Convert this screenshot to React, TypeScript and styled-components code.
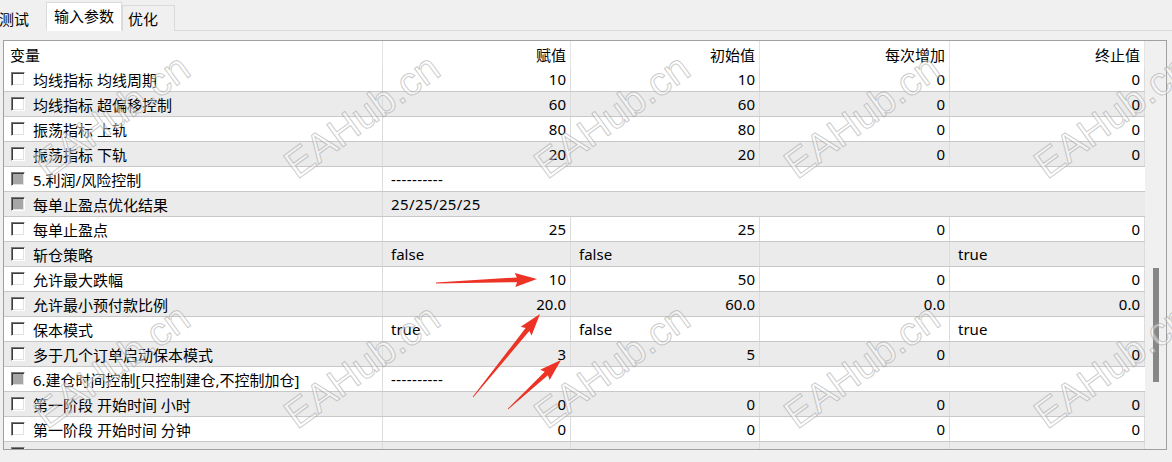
import styled, { createGlobalStyle } from 'styled-components';

const GlobalStyle = createGlobalStyle`
  html, body {
    margin: 0;
    padding: 0;
    background: #f0f0f0;
  }
  body {
    font-family: "Noto Sans", "Noto Sans CJK SC", sans-serif;
    color: #000;
  }
`;

const COLS = '379px 188px 189px 190px 195px';

interface Param {
  name: string;
  values?: string[];
  section?: string;
}

const params: Param[] = [
  { name: '均线指标 均线周期', values: ['10', '10', '0', '0'] },
  { name: '均线指标 超偏移控制', values: ['60', '60', '0', '0'] },
  { name: '振荡指标 上轨', values: ['80', '80', '0', '0'] },
  { name: '振荡指标 下轨', values: ['20', '20', '0', '0'] },
  { name: '5.利润/风险控制', section: '----------' },
  { name: '每单止盈点优化结果', section: '25/25/25/25' },
  { name: '每单止盈点', values: ['25', '25', '0', '0'] },
  { name: '斩仓策略', values: ['false', 'false', '', 'true'] },
  { name: '允许最大跌幅', values: ['10', '50', '0', '0'] },
  { name: '允许最小预付款比例', values: ['20.0', '60.0', '0.0', '0.0'] },
  { name: '保本模式', values: ['true', 'false', '', 'true'] },
  { name: '多于几个订单启动保本模式', values: ['3', '5', '0', '0'] },
  { name: '6.建仓时间控制[只控制建仓,不控制加仓]', section: '----------' },
  { name: '第一阶段 开始时间 小时', values: ['0', '0', '0', '0'] },
  { name: '第一阶段 开始时间 分钟', values: ['0', '0', '0', '0'] },
  { name: '', values: ['', '', '', ''] },
];

const headers = ['赋值', '初始值', '每次增加', '终止值'];

const Page = styled.div`
  position: relative;
  width: 1172px;
  height: 462px;
  overflow: hidden;
  background: #f0f0f0;
`;

const TabStrip = styled.div`
  display: flex;
  align-items: flex-end;
  height: 31px;
  box-sizing: border-box;
  margin-left: -7px;
  border-bottom: 1px solid #dadada;
`;

const Tab = styled.div<{ $active?: boolean; $bare?: boolean }>`
  display: flex;
  align-items: center;
  box-sizing: border-box;
  font-size: 15px;
  color: #000;
  white-space: nowrap;
  margin-bottom: -1px;
  height: ${(p) => (p.$active ? '29px' : '26px')};
  padding: ${(p) => (p.$active ? '0 7px 3px 7px' : '0 16px 0 5px')};
  background: ${(p) => (p.$active ? '#ffffff' : '#f0f0f0')};
  border: 1px solid ${(p) => (p.$bare ? 'transparent' : '#dadada')};
  border-bottom: ${(p) => (p.$active ? '1px solid #ffffff' : 'none')};
`;

const Panel = styled.div`
  padding: 9px 5px 0 3px;
`;

const Frame = styled.div`
  height: 410px;
  box-sizing: border-box;
  border: 1px solid #a0a0a0;
  display: grid;
  grid-template-columns: 1141px 21px;
  background: #fff;
`;

const Table = styled.div`
  overflow: hidden;
  background: #fff;
`;

const HeaderRow = styled.div`
  display: grid;
  grid-template-columns: ${COLS};
  height: 26px;
  background: #fff;
`;

const HeaderCell = styled.div<{ $first?: boolean }>`
  display: flex;
  align-items: center;
  justify-content: ${(p) => (p.$first ? 'flex-start' : 'flex-end')};
  padding: ${(p) => (p.$first ? '0 0 0 6px' : '0 4px 0 0')};
  border-right: 1px solid #e4e4e4;
  font-size: 15px;
  white-space: nowrap;
`;

const Row = styled.div<{ $shaded: boolean }>`
  display: grid;
  grid-template-columns: ${COLS};
  height: 25px;
  box-sizing: border-box;
  border-bottom: 1px solid #c8c8c8;
  background: ${(p) => (p.$shaded ? '#ebebeb' : '#ffffff')};
`;

const NameCell = styled.div`
  display: flex;
  align-items: center;
  gap: 8px;
  padding-left: 7px;
  border-right: 1px solid #dcdcdc;
  font-size: 15px;
  white-space: nowrap;
  overflow: hidden;
`;

const Cell = styled.div<{ $left?: boolean }>`
  display: flex;
  align-items: center;
  justify-content: ${(p) => (p.$left ? 'flex-start' : 'flex-end')};
  padding: 0 4px 0 8px;
  border-right: 1px solid #dcdcdc;
  font-size: 15px;
  white-space: nowrap;
  overflow: hidden;
`;

const SectionCell = styled(Cell)`
  grid-column: span 4;
  border-right: none;
  letter-spacing: 0.4px;
`;

const Check = styled.span<{ $disabled?: boolean }>`
  flex: none;
  width: 14px;
  height: 14px;
  box-sizing: border-box;
  border-top: 1px solid #7a7a7a;
  border-left: 1px solid #7a7a7a;
  border-right: 1px solid #ffffff;
  border-bottom: 1px solid #ffffff;
  box-shadow: inset 1px 1px 0 #3c3c3c, inset -1px -1px 0 #e2e2e2;
  background: ${(p) => (p.$disabled ? '#a6a6a6' : '#ffffff')};
`;

const ScrollTrack = styled.div`
  background: #f0f0f0;
  display: flex;
  flex-direction: column;
  align-items: center;
`;

const Thumb = styled.div`
  width: 6px;
  background: #878787;
`;

const Watermarks = styled.div`
  position: absolute;
  inset: 0;
  pointer-events: none;
`;

const Mark = styled.span`
  position: absolute;
  font-family: "Liberation Sans", Arial, sans-serif;
  font-size: 40px;
  line-height: 40px;
  white-space: nowrap;
  color: rgba(255, 255, 255, 0.45);
  -webkit-text-stroke: 1px rgba(150, 150, 150, 0.5);
  transform-origin: 0 34px;
  transform: rotate(-36deg);
`;

const Arrows = styled.svg`
  position: absolute;
  left: 0;
  top: 0;
  pointer-events: none;
`;

function arrowPoints(x1: number, y1: number, x2: number, y2: number) {
  const head = 20;
  const headHalf = 7;
  const neckHalf = 2.4;
  const tailHalf = 0.4;
  const len = Math.hypot(x2 - x1, y2 - y1);
  const ux = (x2 - x1) / len;
  const uy = (y2 - y1) / len;
  const nx = -uy;
  const ny = ux;
  const bx = x2 - ux * head;
  const by = y2 - uy * head;
  const pts = [
    [x1 + nx * tailHalf, y1 + ny * tailHalf],
    [bx + nx * neckHalf, by + ny * neckHalf],
    [bx - ux * 2 + nx * headHalf, by - uy * 2 + ny * headHalf],
    [x2, y2],
    [bx - ux * 2 - nx * headHalf, by - uy * 2 - ny * headHalf],
    [bx - nx * neckHalf, by - ny * neckHalf],
    [x1 - nx * tailHalf, y1 - ny * tailHalf],
  ];
  return pts.map(([x, y]) => `${x.toFixed(1)},${y.toFixed(1)}`).join(' ');
}

const arrows = [
  [436, 283, 537, 279],
  [473, 397, 540, 314],
  [508, 409, 561, 360],
];

const markXs = [47, 297, 547, 797, 1047];
const markYs = [180, 430];

const isWord = (v: string) => v === 'true' || v === 'false';

export default function App() {
  return (
    <Page>
      <GlobalStyle />
      <TabStrip>
        <Tab $bare>测试</Tab>
        <Tab $active>输入参数</Tab>
        <Tab>优化</Tab>
      </TabStrip>
      <Panel>
        <Frame>
          <Table>
            <HeaderRow>
              <HeaderCell $first>变量</HeaderCell>
              {headers.map((h) => (
                <HeaderCell key={h}>{h}</HeaderCell>
              ))}
            </HeaderRow>
            {params.map((p, i) => (
              <Row key={i} $shaded={i % 2 === 1}>
                <NameCell>
                  <Check $disabled={!!p.section} />
                  {p.name}
                </NameCell>
                {p.section !== undefined ? (
                  <SectionCell $left>{p.section}</SectionCell>
                ) : (
                  p.values!.map((v, j) => (
                    <Cell key={j} $left={isWord(v)}>
                      {v}
                    </Cell>
                  ))
                )}
              </Row>
            ))}
          </Table>
          <ScrollTrack>
            <Thumb style={{ marginTop: 227, height: 114 }} />
          </ScrollTrack>
        </Frame>
      </Panel>
      <Watermarks>
        {markYs.map((y) =>
          markXs.map((x) => (
            <Mark key={`${x}-${y}`} style={{ left: x, top: y - 34 }}>
              EAHub.cn
            </Mark>
          ))
        )}
      </Watermarks>
      <Arrows width={1172} height={462} viewBox="0 0 1172 462">
        {arrows.map(([x1, y1, x2, y2], i) => (
          <polygon key={i} points={arrowPoints(x1, y1, x2, y2)} fill="#ec3326" />
        ))}
      </Arrows>
    </Page>
  );
}
